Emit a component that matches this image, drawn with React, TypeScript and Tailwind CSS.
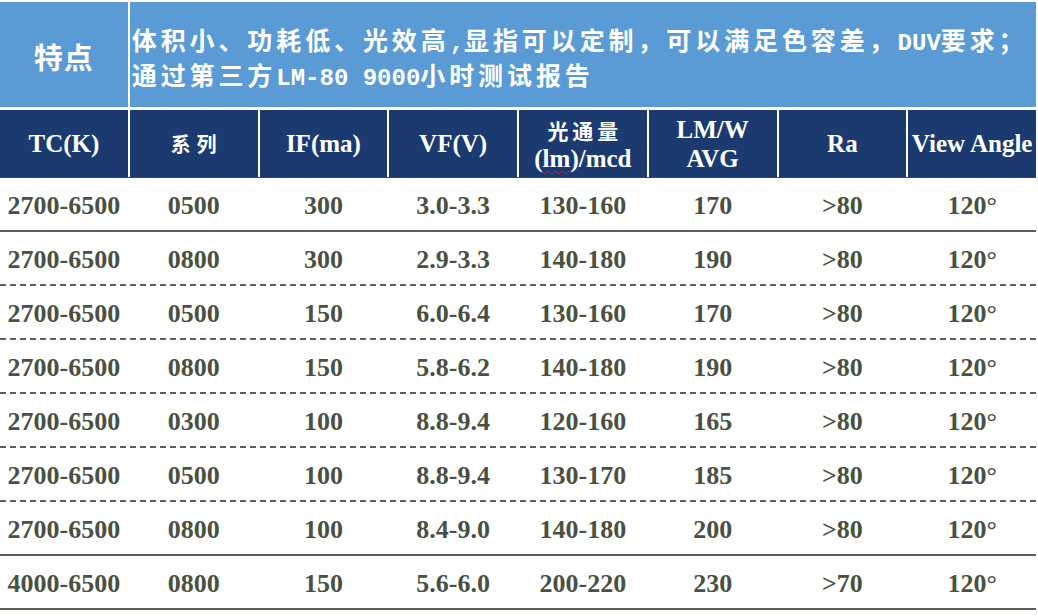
import React from "react";

const rows: string[][] = [
  ["2700-6500", "0500", "300", "3.0-3.3", "130-160", "170", ">80", "120°"],
  ["2700-6500", "0800", "300", "2.9-3.3", "140-180", "190", ">80", "120°"],
  ["2700-6500", "0500", "150", "6.0-6.4", "130-160", "170", ">80", "120°"],
  ["2700-6500", "0800", "150", "5.8-6.2", "140-180", "190", ">80", "120°"],
  ["2700-6500", "0300", "100", "8.8-9.4", "120-160", "165", ">80", "120°"],
  ["2700-6500", "0500", "100", "8.8-9.4", "130-170", "185", ">80", "120°"],
  ["2700-6500", "0800", "100", "8.4-9.0", "140-180", "200", ">80", "120°"],
  ["4000-6500", "0800", "150", "5.6-6.0", "200-220", "230", ">70", "120°"],
];

const rowBorder = [
  "border-solid",
  "border-dashed",
  "border-dashed",
  "border-dashed",
  "border-dashed",
  "border-dashed",
  "border-solid",
  "border-solid",
];

const serif = "font-['Liberation_Serif',_'Times_New_Roman',_serif]";
const cjk = "font-['Noto_Sans_CJK_SC',_sans-serif]";
const mono = "font-['Liberation_Mono',_monospace] text-[24px] tracking-normal";

function HeadCell({ children }: { children: React.ReactNode }) {
  return (
    <div className="bg-[#1b3a70] text-white flex flex-col items-center justify-center text-center leading-[30px]">
      {children}
    </div>
  );
}

export default function App() {
  return (
    <div className="w-[1038px] h-[616px] bg-white overflow-hidden">
      <div className="w-[1036px] pt-[2px]">
        {/* Top feature row */}
        <div className="grid grid-cols-[127.75px_1fr] gap-x-[2px] h-[105px]">
          <div className={`bg-[#5b9bd5] text-white flex items-center justify-center ${cjk} font-bold text-[29px] tracking-[1px] pt-[4px]`}>
            特点
          </div>
          <div className={`bg-[#5b9bd5] text-white flex flex-col justify-center pl-[2px] pt-[8px] ${cjk} font-bold text-[25px] tracking-[3.9px] leading-[31px] whitespace-nowrap`}>
            <div>
              体积小、功耗低、光效高<span className={mono}>,</span>显指可以定制，可以满足色容差，<span className={`${mono} font-bold`}>DUV</span>要求；
            </div>
            <div>
              通过第三方<span className={`${mono} font-bold`}>LM-80 9000</span>小时测试报告
            </div>
          </div>
        </div>

        {/* Header row */}
        <div className="mt-[3px] grid grid-cols-8 gap-x-[2px] h-[68px] border-b border-[#3c4a3a]">
          <HeadCell>
            <span className={`${serif} font-bold text-[25px]`}>TC(K)</span>
          </HeadCell>
          <HeadCell>
            <span className={`${cjk} font-bold text-[20px] tracking-[6px] pl-[6px]`}>系列</span>
          </HeadCell>
          <HeadCell>
            <span className={`${serif} font-bold text-[25px]`}>IF(ma)</span>
          </HeadCell>
          <HeadCell>
            <span className={`${serif} font-bold text-[25px]`}>VF(V)</span>
          </HeadCell>
          <HeadCell>
            <span className={`${cjk} font-bold text-[21px] tracking-[4px] pl-[4px] leading-[30px]`}>光通量</span>
            <span className={`${serif} font-bold text-[25px] leading-[28px]`}>
              (<span className="underline decoration-wavy decoration-[#e02020] decoration-1 underline-offset-[3px]">lm</span>)/mcd
            </span>
          </HeadCell>
          <HeadCell>
            <span className={`${serif} font-bold text-[25px] leading-[30px]`}>LM/W</span>
            <span className={`${serif} font-bold text-[25px] leading-[28px]`}>AVG</span>
          </HeadCell>
          <HeadCell>
            <span className={`${serif} font-bold text-[25px]`}>Ra</span>
          </HeadCell>
          <HeadCell>
            <span className={`${serif} font-bold text-[25px] whitespace-nowrap`}>View Angle</span>
          </HeadCell>
        </div>

        {/* Data rows */}
        {rows.map((r, i) => (
          <div
            key={i}
            className={`grid grid-cols-8 gap-x-[2px] h-[54px] border-b-2 ${rowBorder[i]} border-[#5a6150] ${serif} font-bold text-[26px] text-[#4a5143]`}
          >
            {r.map((c, j) => (
              <div key={j} className="flex items-center justify-center pt-[2px]">
                {c}
              </div>
            ))}
          </div>
        ))}
      </div>
    </div>
  );
}
